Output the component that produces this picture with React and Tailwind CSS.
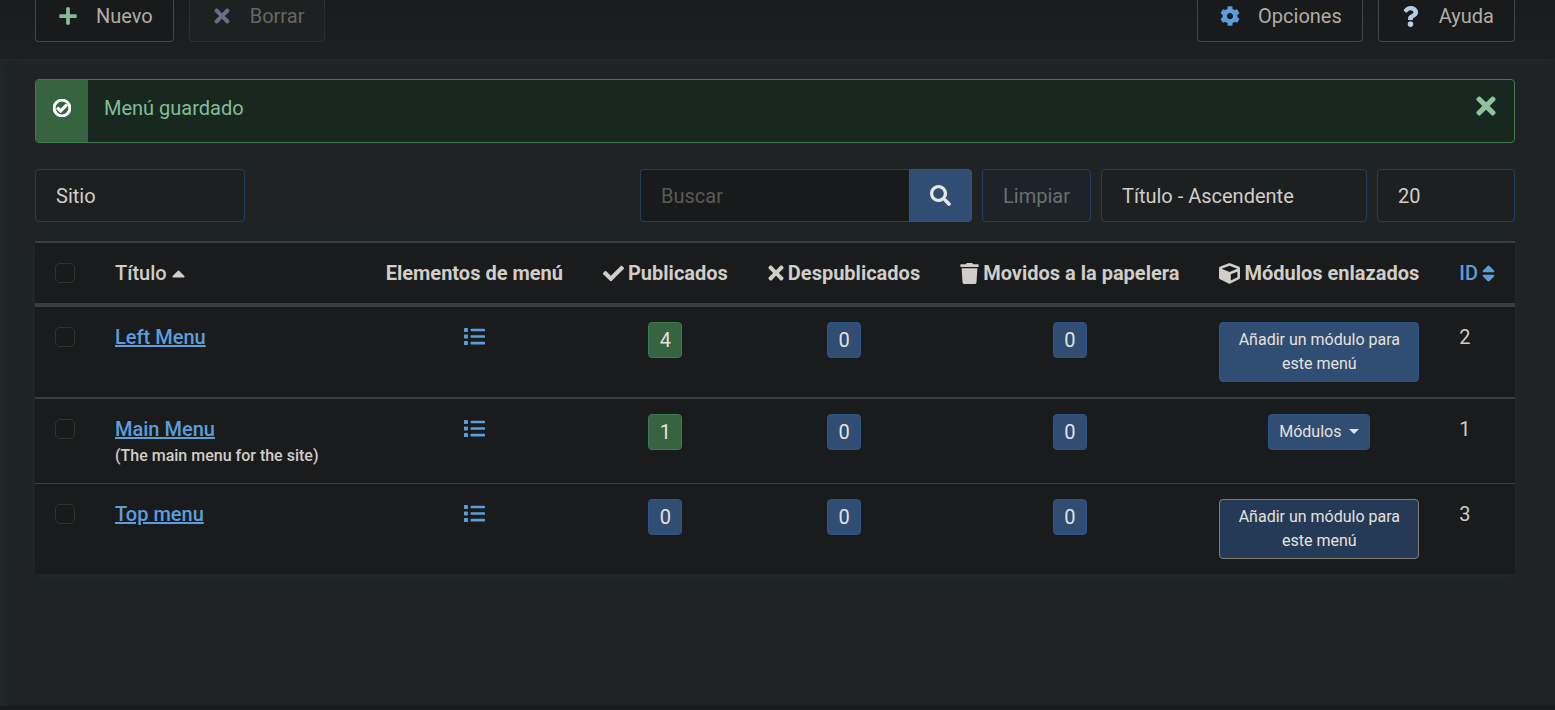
import {
  FaCaretUp,
  FaCheck,
  FaCog,
  FaCube,
  FaList,
  FaPlus,
  FaQuestion,
  FaRegCheckCircle,
  FaSearch,
  FaSort,
  FaTimes,
  FaTrash,
} from "react-icons/fa";

const menus = [
  { id: 2, title: "Left Menu", published: 4, unpublished: 0, trashed: 0, modules: "add" },
  { id: 1, title: "Main Menu", note: "(The main menu for the site)", published: 1, unpublished: 0, trashed: 0, modules: "list" },
  { id: 3, title: "Top menu", published: 0, unpublished: 0, trashed: 0, modules: "add", active: true },
];

const rowBorders = ["", "border-t-2", "border-t"];

function ToolbarButton({ icon, children, disabled }) {
  return (
    <button
      type="button"
      disabled={disabled}
      className={`flex items-center gap-4 rounded-b border border-t-0 px-5 pt-px pb-2.5 ${
        disabled ? "border-[#2c2f30] bg-[#1e2122] text-[#696763]" : "border-[#434647] bg-[#181a1b] text-[#b2ada4]"
      }`}
    >
      <span className="flex w-6 justify-center">{icon}</span>
      {children}
    </button>
  );
}

function Count({ value, green }) {
  return (
    <a
      href="#items"
      className={`inline-block min-w-[34px] rounded border px-2.5 py-[5px] align-top leading-6 text-[#e5e2dd] ${
        green && value > 0 ? "border-[#3e7c4d] bg-[#366340]" : "border-[#2f5587] bg-[#304d73]"
      }`}
    >
      {value}
    </a>
  );
}

function HeadLabel({ icon, children }) {
  return (
    <span className="flex items-center justify-center gap-1">
      {icon}
      {children}
    </span>
  );
}

function Check({ label }) {
  return (
    <input
      type="checkbox"
      aria-label={label}
      className="my-[5px] block size-5 appearance-none rounded-[5px] border border-[#33332f] bg-[#181a1b] checked:bg-[#304d73]"
    />
  );
}

function ModuleButton({ menu }) {
  if (menu.modules === "list") {
    return (
      <button type="button" className="inline-flex items-center gap-2 rounded border border-[#2f5587] bg-[#304d73] px-2.5 py-[5px] align-top text-base text-[#e5e2dd]">
        Módulos
        <span className="mb-0.5 border-x-5 border-t-5 border-x-transparent border-t-[#e5e2dd]" />
      </button>
    );
  }
  return (
    <button
      type="button"
      className={`block w-full rounded border px-2.5 py-[5px] text-base text-[#e5e2dd] ${
        menu.active ? "border-[#837b6e] bg-[#253a56]" : "border-[#2f5587] bg-[#304d73]"
      }`}
    >
      Añadir un módulo para este menú
    </button>
  );
}

const field = "h-[53px] appearance-none border border-[#253d60] px-5 text-xl outline-none";

export default function App() {
  return (
    <div className="flex min-h-screen flex-col border-b-4 border-[#191a1c] bg-[#1f2323] font-[Roboto,sans-serif] text-xl leading-[30px] text-[#d1cdc7] shadow-[inset_12px_0_10px_-6px_#22272c]">
      <header className="flex justify-between bg-linear-to-b from-[#1a1b1c] to-[#1e1f21] pr-10 pb-[17px] pl-[35px] shadow-[0_2px_6px_#242a2f]">
        <div className="flex gap-[15px]">
          <ToolbarButton icon={<FaPlus className="size-5 text-[#84bd91]" />}>Nuevo</ToolbarButton>
          <ToolbarButton disabled icon={<FaTimes className="size-[22px] text-[#66707e]" />}>Borrar</ToolbarButton>
        </div>
        <div className="flex gap-[15px]">
          <ToolbarButton icon={<FaCog className="size-5 text-[#5c9edc]" />}>Opciones</ToolbarButton>
          <ToolbarButton icon={<FaQuestion className="size-[21px] text-[#b5cde6]" />}>Ayuda</ToolbarButton>
        </div>
      </header>

      <main className="pt-5 pr-10 pl-[35px]">
        <div role="alert" className="flex h-16 overflow-hidden rounded border border-[#3e7c4d] bg-[#182821] text-[#84bd91]">
          <div className="flex w-[52px] justify-center bg-[#366340] pt-[19px] text-white">
            <FaRegCheckCircle className="size-[18px]" stroke="currentColor" strokeWidth="36" />
          </div>
          <p className="flex-1 px-4 pt-[13px]">Menú guardado</p>
          <button type="button" aria-label="Cerrar" className="flex self-start px-3.5 pt-3">
            <FaTimes className="size-7 text-[#8cc59a]" />
          </button>
        </div>

        <form className="mt-[26px] flex justify-between gap-2.5" onSubmit={(e) => e.preventDefault()}>
          <select aria-label="Cliente" className={`${field} w-[210px] rounded bg-[#1d2021]`}>
            <option>Sitio</option>
          </select>
          <div className="flex gap-2.5">
            <div className="flex">
              <input
                type="text"
                aria-label="Buscar"
                placeholder="Buscar"
                className={`${field} w-[269px] rounded-l border-r-0 bg-[#181a1b] placeholder:text-[#5b5a55]`}
              />
              <button type="submit" aria-label="Buscar" className="flex w-[63px] items-center justify-center rounded-r border border-[#2f5587] bg-[#304d73] text-[#e8e6e3]">
                <FaSearch className="size-[21px]" />
              </button>
            </div>
            <button type="button" disabled className={`${field} rounded bg-[#1d2329] text-[#6b6f72]`}>
              Limpiar
            </button>
            <select aria-label="Ordenar por" className={`${field} w-[266px] rounded bg-[#1d2021]`}>
              <option>Título - Ascendente</option>
            </select>
            <select aria-label="Cantidad a mostrar" className={`${field} w-[138px] rounded bg-[#1d2021]`}>
              <option>20</option>
            </select>
          </div>
        </form>

        <table className="mt-[19px] w-full border-separate border-spacing-0 bg-[#191b1c] shadow-[0_2px_10px_-2px_#242c36]">
          <thead>
            <tr className="whitespace-nowrap [&>th]:border-t-2 [&>th]:border-b-4 [&>th]:border-[#383e3e] [&>th]:px-5 [&>th]:py-[15px]">
              <th>
                <Check label="Marcar todos los elementos" />
              </th>
              <th className="w-full text-left font-medium">
                <a href="#title" className="inline-flex items-center gap-1">
                  Título
                  <FaCaretUp className="h-[21px] w-[15px]" />
                </a>
              </th>
              <th>Elementos de menú</th>
              <th>
                <HeadLabel icon={<FaCheck className="size-[21px]" />}>Publicados</HeadLabel>
              </th>
              <th>
                <HeadLabel icon={<FaTimes className="h-[22px] w-4" />}>Despublicados</HeadLabel>
              </th>
              <th>
                <HeadLabel icon={<FaTrash className="h-[21px] w-[19px]" />}>Movidos a la papelera</HeadLabel>
              </th>
              <th>
                <HeadLabel icon={<FaCube className="size-[21px]" />}>Módulos enlazados</HeadLabel>
              </th>
              <th className="font-medium text-[#5c9edc]">
                <a href="#id" className="flex items-center gap-1">
                  ID
                  <FaSort className="h-[21px] w-[13px]" />
                </a>
              </th>
            </tr>
          </thead>
          <tbody>
            {menus.map((menu, i) => (
              <tr key={menu.id} className="align-top">
                <td className={`border-[#383e3e] px-5 py-[15px] ${rowBorders[i]}`}>
                  <Check label={`Seleccionar ${menu.title}`} />
                </td>
                <th scope="row" className={`border-[#383e3e] px-5 py-[15px] text-left font-medium ${rowBorders[i]}`}>
                  <a href="#edit" className="block w-fit text-[#5c9edc] underline">{menu.title}</a>
                  {menu.note && <div className="text-base">{menu.note}</div>}
                </th>
                <td className={`border-[#383e3e] px-5 py-[15px] text-center ${rowBorders[i]}`}>
                  <a href="#menu-items" aria-label={`Elementos de ${menu.title}`} className="inline-flex h-7 items-center align-top text-[#5c9edc]">
                    <FaList className="size-[21px]" />
                  </a>
                </td>
                <td className={`border-[#383e3e] px-5 py-[15px] text-center ${rowBorders[i]}`}>
                  <Count value={menu.published} green />
                </td>
                <td className={`border-[#383e3e] px-5 py-[15px] text-center ${rowBorders[i]}`}>
                  <Count value={menu.unpublished} />
                </td>
                <td className={`border-[#383e3e] px-5 py-[15px] text-center ${rowBorders[i]}`}>
                  <Count value={menu.trashed} />
                </td>
                <td className={`border-[#383e3e] px-5 py-[15px] text-center ${rowBorders[i]}`}>
                  <ModuleButton menu={menu} />
                </td>
                <td className={`border-[#383e3e] px-5 py-[15px] ${rowBorders[i]}`}>{menu.id}</td>
              </tr>
            ))}
          </tbody>
        </table>
      </main>
    </div>
  );
}
